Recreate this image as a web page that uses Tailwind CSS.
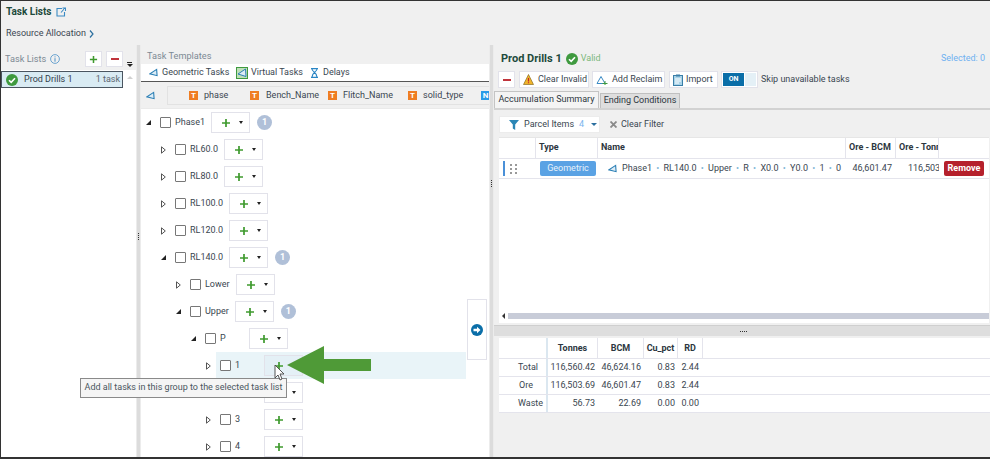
<!DOCTYPE html>
<html lang="en">
<head>
    <meta charset="UTF-8">
    <title>Task Lists</title>
    <script src="https://cdn.jsdelivr.net/npm/@tailwindcss/browser@4"></script>
</head>
<body class="w-[990px] h-[459px] overflow-hidden bg-[#f0f0f0] font-['Roboto',sans-serif] text-[9px] text-[#3a4650]">
    <svg class="hidden">
        <symbol id="plus" viewBox="0 0 10 10"><path d="M5 1v8M1 5h8" stroke="#3f9a2e" stroke-width="1.7" fill="none"/></symbol>
        <symbol id="geo" viewBox="0 0 10 10"><path d="M8.5 1.5 1 6.5l8 2z" stroke="#2b7fb5" stroke-width="1.2" fill="#dcecf6"/></symbol>
        <symbol id="check" viewBox="0 0 12 12"><circle cx="6" cy="6" r="6" fill="#3f9a3f"/><path d="M3 6.2l2.2 2.2L9 4.2" stroke="#fff" stroke-width="1.6" fill="none"/></symbol>
    </svg>

    <div class="relative w-full h-full flex flex-col border-t border-l border-b-2 border-[#333]">
        <!-- page header -->
        <div class="h-[44px] shrink-0 pl-[5px]">
            <div class="h-[21px] flex items-center gap-[4px] text-[10px] font-bold text-[#1d4a3c]">
                Task Lists
                <svg class="w-[10px] h-[10px]" viewBox="0 0 10 10" fill="none" stroke="#3a8ac4" stroke-width="1.1"><path d="M6 1.5H1v7.500h7.500V5M5 5.500 9 1M6.500 1H9.500V4"/></svg>
            </div>
            <div class="mt-[1px] h-[22px] flex items-center gap-[3px]">
                Resource Allocation
                <svg class="w-[5px] h-[8px]" viewBox="0 0 5 8" fill="none" stroke="#2b6f9f" stroke-width="1.2"><path d="M1 .5 4 4 1 7.500"/></svg>
            </div>
        </div>

        <div class="flex flex-1 min-h-0">
            <!-- task lists pane -->
            <div class="w-[135px] shrink-0 flex flex-col">
                <div class="h-[25px] shrink-0 relative flex items-center pl-[4px] pt-[2px] gap-[4px] text-[9.2px] text-[#7d8a94]">
                    Task Lists
                    <svg class="w-[10px] h-[10px]" viewBox="0 0 10 10" fill="none" stroke="#4a90c8"><circle cx="5" cy="5" r="4.400" stroke-width=".8"/><path d="M5 4.200v3.500M5 2.400v1" stroke-width="1"/></svg>
                    <div class="absolute left-[84px] top-[6px] w-[17px] h-[16px] bg-white border border-[#e2e2ea] flex items-center justify-center"><svg class="w-[9px] h-[9px]"><use href="#plus"/></svg></div>
                    <div class="absolute left-[105px] top-[6px] w-[17px] h-[16px] bg-white border border-[#e2e2ea] flex items-center justify-center"><div class="w-[8px] h-[2px] bg-[#c0343c]"></div></div>
                    <div class="absolute left-[126px] top-[17px] w-[5px] h-[1px] bg-[#222]"></div>
                    <div class="absolute left-[126px] top-[19px] border-x-[3px] border-t-[3px] border-x-transparent border-t-[#222]"></div>
                </div>
                <div class="flex-1 bg-white flex">
                    <div class="w-[122px] h-[17px] mt-[1px] bg-[#d9ebf3] border border-[#4a5560] flex items-center pl-[4px] pr-[2px] text-[#34404a]">
                        <svg class="w-[12px] h-[12px]"><use href="#check"/></svg>
                        <span class="ml-[6px]">Prod Drills 1</span>
                        <span class="ml-auto text-[#5d6872]">1 task</span>
                    </div>
                    <div class="ml-[4px] mt-[6px] h-0 border-x-[3px] border-b-[3px] border-x-transparent border-b-[#d0d0d0]"></div>
                </div>
            </div>

            <div class="w-[5px] shrink-0 bg-[#dcdcdc] border-x border-[#ececec] flex flex-col items-center justify-center gap-[1px] pb-[30px]">
                <i class="w-[1px] h-[1px] bg-[#333]"></i><i class="w-[1px] h-[1px] bg-[#333]"></i><i class="w-[1px] h-[1px] bg-[#333]"></i><i class="w-[1px] h-[1px] bg-[#333]"></i>
            </div>

            <!-- task templates pane -->
            <div class="w-[348px] shrink-0 flex flex-col relative">
                <div class="h-[19px] shrink-0 pl-[6px] pt-[3px] flex items-center text-[9.2px] text-[#7d8a94]">Task Templates</div>
                <div class="h-[18px] shrink-0 bg-white border-b-[1.500px] border-[#555] flex items-center pl-[8px] whitespace-nowrap">
                    <svg class="w-[9px] h-[9px] shrink-0"><use href="#geo"/></svg>
                    <span class="ml-[4px] w-[66px] shrink-0">Geometric Tasks</span>
                    <svg class="w-[12px] h-[12px] ml-[8px] shrink-0" viewBox="0 0 12 12"><rect width="12" height="12" fill="#bfe0b8"/><rect x=".5" y=".5" width="11" height="11" fill="none" stroke="#3f9a3f"/><path d="M9.500 2 2 7l8 2.500z" stroke="#2b7fb5" fill="#dcecf6"/></svg>
                    <span class="ml-[3px] w-[50px] shrink-0">Virtual Tasks</span>
                    <svg class="w-[9px] h-[10px] ml-[9px] shrink-0" viewBox="0 0 9 10" fill="none" stroke="#2b86c5" stroke-width="1.100"><path d="M1 .6h7M1 9.400h7M2 1c0 3 5 3 5 8M7 1c0 3-5 3-5 8"/></svg>
                    <span class="ml-[4px]">Delays</span>
                </div>
                <div class="h-[27px] shrink-0 flex items-center pl-[5px] overflow-hidden border-b border-[#eaeaea]">
                    <svg class="w-[9px] h-[9px] shrink-0"><use href="#geo"/></svg>
                    <div class="ml-[12px] h-[19px] flex-1 border-l border-y border-[#e2e2e2] flex items-center pl-[21px] pt-[1px] whitespace-nowrap">
                        <b class="w-[9px] h-[9px] bg-[#ef7d22] text-white text-[8px] leading-[9px] text-center shrink-0">T</b><span class="ml-[6px] w-[46px] shrink-0">phase</span>
                        <b class="w-[9px] h-[9px] bg-[#ef7d22] text-white text-[8px] leading-[9px] text-center shrink-0">T</b><span class="ml-[7px] w-[62px] shrink-0">Bench_Name</span>
                        <b class="w-[9px] h-[9px] bg-[#ef7d22] text-white text-[8px] leading-[9px] text-center shrink-0">T</b><span class="ml-[6px] w-[65px] shrink-0">Flitch_Name</span>
                        <b class="w-[9px] h-[9px] bg-[#ef7d22] text-white text-[8px] leading-[9px] text-center shrink-0">T</b><span class="ml-[6px] w-[58px] shrink-0">solid_type</span>
                        <b class="w-[9px] h-[9px] bg-[#2b9be8] text-white text-[8px] leading-[9px] text-center shrink-0">N</b>
                    </div>
                </div>
                <div id="tree" class="flex-1 bg-white overflow-hidden"></div>
                <div class="absolute left-[326px] top-[254px] w-[20px] h-[61px] bg-white border border-[#e2e2ea] flex items-center justify-center">
                    <svg class="w-[12px] h-[12px]" viewBox="0 0 12 12"><circle cx="6" cy="6" r="6" fill="#0a6ea8"/><path d="M2.500 4.800h3.500V2.800L9.500 6 6 9.200V7.200H2.500z" fill="#fff"/></svg>
                </div>
            </div>

            <div class="w-[5px] shrink-0 bg-[#dcdcdc] border-x border-[#ececec] flex flex-col items-center justify-center gap-[1px] pb-[135px]">
                <i class="w-[1px] h-[1px] bg-[#333]"></i><i class="w-[1px] h-[1px] bg-[#333]"></i><i class="w-[1px] h-[1px] bg-[#333]"></i><i class="w-[1px] h-[1px] bg-[#333]"></i>
            </div>

            <!-- selected task list pane -->
            <div class="flex-1 min-w-0 flex flex-col">
                <div class="h-[26px] shrink-0 flex items-center pl-[7px] pr-[5px] pt-[2px]">
                    <span class="text-[11px] font-bold text-[#1d4a3c]">Prod Drills 1</span>
                    <svg class="w-[12px] h-[12px] ml-[4px]"><use href="#check"/></svg>
                    <span class="ml-[3px] text-[#7cb87c]">Valid</span>
                    <span class="ml-auto text-[#6fb0f0]">Selected: 0</span>
                </div>
                <div class="h-[17px] shrink-0 flex items-center pl-[4px] whitespace-nowrap">
                    <div class="w-[17px] h-[17px] bg-white border border-[#e2e2ea] flex items-center justify-center"><div class="w-[8px] h-[2px] bg-[#c0343c]"></div></div>
                    <div class="ml-[4px] w-[70px] h-[17px] bg-white border border-[#e2e2ea] flex items-center pl-[3px] gap-[4px]">
                        <svg class="w-[11px] h-[11px] shrink-0" viewBox="0 0 11 11"><path d="M5.500 .5 10.500 10.500H.5z" fill="#f0b429" stroke="#7a5a10" stroke-width=".6"/><path d="M5.500 4v3.500M5.500 8.200v1" stroke="#c0262c" stroke-width="1.200"/></svg>Clear Invalid
                    </div>
                    <div class="ml-[3px] w-[73px] h-[17px] bg-white border border-[#e2e2ea] flex items-center pl-[3px] gap-[4px]">
                        <svg class="w-[12px] h-[10px] shrink-0" viewBox="0 0 12 10" fill="none" stroke-width="1"><path d="M1 8.500 5 1.500 9 8.500z" stroke="#3a8ac4"/><path d="M6.500 8.500h5M9 6v4" stroke="#3f9a3f"/></svg>Add Reclaim
                    </div>
                    <div class="ml-[4px] w-[49px] h-[17px] bg-white border border-[#e2e2ea] flex items-center pl-[3px] gap-[3px]">
                        <svg class="w-[10px] h-[12px] shrink-0" viewBox="0 0 10 12"><rect x=".5" y="1.500" width="9" height="10" fill="#a9d3e8" stroke="#3a7fa8"/><rect x="3" y=".5" width="4" height="2" fill="#3a7fa8"/><path d="M2 5h6M2 7h6M2 9h4" stroke="#fff"/></svg>Import
                    </div>
                    <div class="ml-[3px] w-[37px] h-[17px] bg-white border border-[#e2e2ea] flex items-center p-[1px]">
                        <div class="w-[22px] h-[13px] bg-[#0a6ea8] text-white text-[7px] font-bold flex items-center justify-center">ON</div>
                        <div class="ml-[1px] w-[11px] h-[13px] bg-[#e4f0f6]"></div>
                    </div>
                    <span class="ml-[3px]">Skip unavailable tasks</span>
                </div>
                <div class="h-[22px] shrink-0 flex items-end border-b-2 border-[#d2d2d2] whitespace-nowrap">
                    <div class="w-[105px] h-[17px] bg-[#f4f4f4] border border-b-0 border-[#c4c4c4] flex items-center justify-center text-[#2c3640]">Accumulation Summary</div>
                    <div class="ml-[1px] w-[80px] h-[15px] bg-[#dedede] border border-b-0 border-[#c0c0c0] flex items-center justify-center text-[#2c3640]">Ending Conditions</div>
                </div>
                <div class="flex-1 min-h-0 pl-[5px] flex flex-col">
                    <div class="h-[27px] shrink-0 flex items-center pt-[2px] whitespace-nowrap">
                        <div class="w-[101px] h-[17px] bg-white border border-[#ececec] flex items-center pl-[9px]">
                            <svg class="w-[10px] h-[10px] shrink-0" viewBox="0 0 10 10"><path d="M0 0h10L6.200 4.500V10L3.800 8.500V4.500z" fill="#2b86b5"/></svg>
                            <span class="ml-[5px]">Parcel Items</span><span class="ml-[5px] text-[#7ab5ee]">4</span>
                            <div class="ml-[7px] border-x-[3px] border-t-[3px] border-x-transparent border-t-[#2b6f9f]"></div>
                        </div>
                        <svg class="ml-[10px] w-[7px] h-[7px]" viewBox="0 0 7 7" stroke="#8a8a8a" stroke-width="1.800"><path d="M.5.5l6 6M6.500.5l-6 6"/></svg>
                        <span class="ml-[4px]">Clear Filter</span>
                    </div>
                    <!-- accumulation grid -->
                    <div class="h-[186px] shrink-0 bg-white mr-[1px] relative border-t border-[#e6e6e6] overflow-hidden">
                        <div class="h-[21px] flex items-center font-bold text-[#2c3640] border-b border-[#e4e4ec] whitespace-nowrap">
                            <div class="w-[37px] h-full border-r border-[#e4e4ec]"></div>
                            <div class="w-[62px] h-full pl-[3px] flex items-center border-r border-[#e4e4ec]">Type</div>
                            <div class="w-[248px] h-full pl-[3px] flex items-center border-r border-[#e4e4ec]">Name</div>
                            <div class="w-[50px] h-full pl-[3px] flex items-center border-r border-[#e4e4ec]">Ore - BCM</div>
                            <div class="w-[43px] h-full pl-[3px] flex items-center border-r border-[#e4e4ec] overflow-hidden">Ore - Tonnes</div>
                        </div>
                        <div class="h-[20px] flex items-center border-b border-[#e4e4ec] whitespace-nowrap">
                            <div class="w-[37px] h-full flex items-center">
                                <div class="ml-[4px] w-[2px] h-[15px] bg-[#4a90d8]"></div>
                                <div class="ml-[5px] grid grid-cols-2 gap-x-[3px] gap-y-[2px]"><i class="w-[2px] h-[2px] bg-[#999]"></i><i class="w-[2px] h-[2px] bg-[#999]"></i><i class="w-[2px] h-[2px] bg-[#999]"></i><i class="w-[2px] h-[2px] bg-[#999]"></i><i class="w-[2px] h-[2px] bg-[#999]"></i><i class="w-[2px] h-[2px] bg-[#999]"></i></div>
                            </div>
                            <div class="w-[62px] pl-[4px]"><div class="w-[56px] h-[15px] rounded-[2px] bg-[#5aa2e4] text-[#e8f2fb] flex items-center justify-center">Geometric</div></div>
                            <div class="w-[248px] pl-[10px] flex items-center">
                                <svg class="w-[9px] h-[9px] shrink-0"><use href="#geo"/></svg>
                                <span class="ml-[5px]">Phase1 <em class="not-italic text-[#7fb6d6] px-[2px]">•</em> RL140.0 <em class="not-italic text-[#7fb6d6] px-[2px]">•</em> Upper <em class="not-italic text-[#7fb6d6] px-[2px]">•</em> R <em class="not-italic text-[#7fb6d6] px-[2px]">•</em> X0.0 <em class="not-italic text-[#7fb6d6] px-[2px]">•</em> Y0.0 <em class="not-italic text-[#7fb6d6] px-[2px]">•</em> 1 <em class="not-italic text-[#7fb6d6] px-[2px]">•</em> 0</span>
                            </div>
                            <div class="w-[50px] text-right pr-[4px]">46,601.47</div>
                            <div class="w-[43px] overflow-hidden pl-[12px]">116,503</div>
                            <div class="ml-[5px] w-[40px] h-[15px] rounded-[2px] bg-[#b5202c] text-white font-bold flex items-center justify-center">Remove</div>
                        </div>
                        <div class="absolute left-[3px] bottom-[4px] right-0 h-[6px] flex items-center">
                            <div class="border-y-[3px] border-r-[3px] border-y-transparent border-r-[#333]"></div>
                            <div class="ml-[3px] flex-1 h-[6px] bg-[#c8ccd8]"></div>
                        </div>
                    </div>
                    <div class="h-[11px] shrink-0 -ml-[5px] mt-[2px] bg-[#dedede] border-t border-[#cfcfcf] flex items-center justify-center gap-[1px] pl-[2px]">
                        <i class="w-[1px] h-[1px] bg-[#333]"></i><i class="w-[1px] h-[1px] bg-[#333]"></i><i class="w-[1px] h-[1px] bg-[#333]"></i><i class="w-[1px] h-[1px] bg-[#333]"></i>
                    </div>
                    <!-- summary grid -->
                    <div class="bg-white mt-[2px] whitespace-nowrap">
                        <div class="h-[21px] flex font-bold text-[#2c3640] border-b border-[#e4e4ec] text-center leading-[21px]">
                            <div class="w-[49px] border-r-2 border-[#dbe7f0]"></div><div class="w-[50px] border-r border-[#e4e4ec]">Tonnes</div><div class="w-[46px] border-r border-[#e4e4ec]">BCM</div><div class="w-[34px] border-r border-[#e4e4ec]">Cu_pct</div><div class="w-[25px] border-r border-[#e4e4ec]">RD</div>
                        </div>
                        <div class="h-[18px] flex border-b border-[#e4e4ec] text-right leading-[17px]">
                            <div class="w-[49px] border-r-2 border-[#dbe7f0] pr-[8px]">Total</div><div class="w-[50px] pr-[3px]">116,560.42</div><div class="w-[46px] pr-[3px]">46,624.16</div><div class="w-[34px] pr-[3px]">0.83</div><div class="w-[25px] pr-[4px]">2.44</div>
                        </div>
                        <div class="h-[18px] flex border-b border-[#e4e4ec] text-right leading-[17px]">
                            <div class="w-[49px] border-r-2 border-[#dbe7f0] pr-[13px]">Ore</div><div class="w-[50px] pr-[3px]">116,503.69</div><div class="w-[46px] pr-[3px]">46,601.47</div><div class="w-[34px] pr-[3px]">0.83</div><div class="w-[25px] pr-[4px]">2.44</div>
                        </div>
                        <div class="h-[18px] flex border-b border-[#e4e4ec] text-right leading-[17px]">
                            <div class="w-[49px] border-r-2 border-[#dbe7f0] pr-[3px]">Waste</div><div class="w-[50px] pr-[3px]">56.73</div><div class="w-[46px] pr-[3px]">22.69</div><div class="w-[34px] pr-[3px]">0.00</div><div class="w-[25px] pr-[4px]">0.00</div>
                        </div>
                    </div>
                </div>
            </div>
        </div>

        <!-- hover tooltip, cursor and callout arrow over the tree -->
        <div class="absolute left-[79px] top-[377px] w-[207px] h-[20px] bg-[#f5f5f5] border border-[#8a8a8a] flex items-center justify-center text-[#4a5560] whitespace-nowrap">Add all tasks in this group to the selected task list</div>
        <svg class="absolute left-[273px] top-[363px] w-[11px] h-[17px]" viewBox="0 0 11 17"><path d="M1 1v13l3-3 2 5 2-1-2-5h4z" fill="#fff" stroke="#444" stroke-width=".9"/></svg>
        <svg class="absolute left-[285px] top-[344px] w-[86px] h-[40px]" viewBox="0 0 86 40"><path d="M1 20 38 1v13h47v12H38v13z" fill="#4f9a37"/></svg>
    </div>

    <script>
        // depth, label, pending count, expanded
        const rows = [
            [0, 'Phase1', 1, true], [1, 'RL60.0'], [1, 'RL80.0'], [1, 'RL100.0'], [1, 'RL120.0'],
            [1, 'RL140.0', 1, true], [2, 'Lower'], [2, 'Upper', 1, true], [3, 'P', 0, true],
            [4, '1'], [4, '2'], [4, '3'], [4, '4']
        ];
        document.getElementById('tree').innerHTML = rows.map(([depth, label, count, open]) => {
            const hovered = label === '1';
            return `<div class="h-[27px] flex items-center ${hovered ? 'relative' : ''}" style="padding-left:${5 + depth * 15}px">
                ${hovered ? '<div class="absolute left-[75px] top-[0px] w-[250px] h-[27px] bg-[#e9f4f8]"></div>' : ''}
                <div class="relative w-[5px] flex justify-center">${open
                    ? '<div class="border-b-[5px] border-l-[5px] border-b-[#222] border-l-transparent"></div>'
                    : '<svg class="w-[5px] h-[8px]" viewBox="0 0 5 8" fill="#fff" stroke="#555"><path d="M.5.8 4.300 4 .5 7.200z"/></svg>'}</div>
                <div class="relative ml-[9px] w-[11px] h-[11px] bg-white border border-[#777] rounded-[1px]"></div>
                <span class="relative ml-[4px] min-w-[23px] whitespace-nowrap">${label}</span>
                <div class="relative ml-[6px] w-[39px] h-[21px] ${hovered ? 'bg-[#e4f0f6]' : 'bg-white'} border border-[#e2e2ea] flex items-center">
                    <svg class="ml-[9px] w-[10px] h-[10px]"><use href="#plus"/></svg>
                    <div class="ml-[8px] border-x-[2.500px] border-t-[3px] border-x-transparent border-t-[#222]"></div>
                </div>
                ${count ? '<div class="ml-[7px] w-[15px] h-[15px] rounded-full bg-[#b0c0d8] text-white font-bold flex items-center justify-center text-[9px]">1</div>' : ''}
            </div>`;
        }).join('');
    </script>
</body>
</html>
